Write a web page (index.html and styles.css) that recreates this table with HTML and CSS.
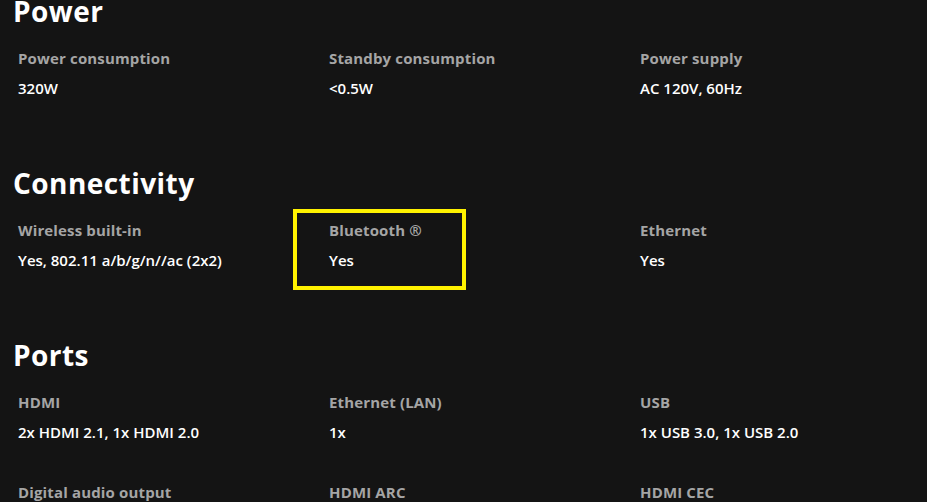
FILE: index.html
```html
<!DOCTYPE html>
<html lang="en">
<head>
<meta charset="utf-8">
<title>Specifications</title>
<link rel="stylesheet" href="styles.css">
</head>
<body>
<main class="specs">
  <section class="spec-section">
    <h2 class="spec-title">Power</h2>
    <div class="spec-grid">
      <div class="spec-item"><div class="spec-label">Power consumption</div><div class="spec-value">320W</div></div>
      <div class="spec-item"><div class="spec-label">Standby consumption</div><div class="spec-value">&lt;0.5W</div></div>
      <div class="spec-item"><div class="spec-label">Power supply</div><div class="spec-value">AC 120V, 60Hz</div></div>
    </div>
  </section>
  <section class="spec-section">
    <h2 class="spec-title">Connectivity</h2>
    <div class="spec-grid">
      <div class="spec-item"><div class="spec-label">Wireless built-in</div><div class="spec-value">Yes, 802.11 a/b/g/n//ac (2x2)</div></div>
      <div class="spec-item highlighted"><div class="spec-label">Bluetooth ®</div><div class="spec-value">Yes</div><span class="highlight-box"></span></div>
      <div class="spec-item"><div class="spec-label">Ethernet</div><div class="spec-value">Yes</div></div>
    </div>
  </section>
  <section class="spec-section">
    <h2 class="spec-title">Ports</h2>
    <div class="spec-grid">
      <div class="spec-item"><div class="spec-label">HDMI</div><div class="spec-value">2x HDMI 2.1, 1x HDMI 2.0</div></div>
      <div class="spec-item"><div class="spec-label">Ethernet (LAN)</div><div class="spec-value">1x</div></div>
      <div class="spec-item"><div class="spec-label">USB</div><div class="spec-value">1x USB 3.0, 1x USB 2.0</div></div>
      <div class="spec-item"><div class="spec-label">Digital audio output</div><div class="spec-value">1x</div></div>
      <div class="spec-item"><div class="spec-label">HDMI ARC</div><div class="spec-value">Yes</div></div>
      <div class="spec-item"><div class="spec-label">HDMI CEC</div><div class="spec-value">Yes</div></div>
    </div>
  </section>
</main>
</body>
</html>
```

FILE: styles.css
```css
html, body {
  margin: 0;
  padding: 0;
  background: #141414;
  overflow: hidden;
}
body {
  font-family: "Open Sans", "Liberation Sans", sans-serif;
  color: #ffffff;
}
.specs {
  margin-top: -6px;
  display: flex;
  flex-direction: column;
  gap: 33px;
}
.spec-title {
  margin: 0 0 15px 0;
  padding-left: 13px;
  font-size: 28px;
  line-height: 34px;
  font-weight: 700;
  color: #ffffff;
  letter-spacing: 0.45px;
}
.spec-grid {
  display: grid;
  grid-template-columns: repeat(3, 311px);
  padding-left: 18px;
}
.spec-item {
  position: relative;
  height: 90px;
}
.spec-label {
  font-size: 15px;
  line-height: 30px;
  font-weight: 700;
  color: #a5a5a5;
  letter-spacing: 0.15px;
}
.spec-value {
  font-size: 15px;
  line-height: 30px;
  font-weight: 600;
  color: #ffffff;
}
.highlight-box {
  position: absolute;
  left: -36px;
  top: -6px;
  width: 173px;
  height: 81px;
  box-sizing: border-box;
  border: 4px solid #fff200;
}
```
